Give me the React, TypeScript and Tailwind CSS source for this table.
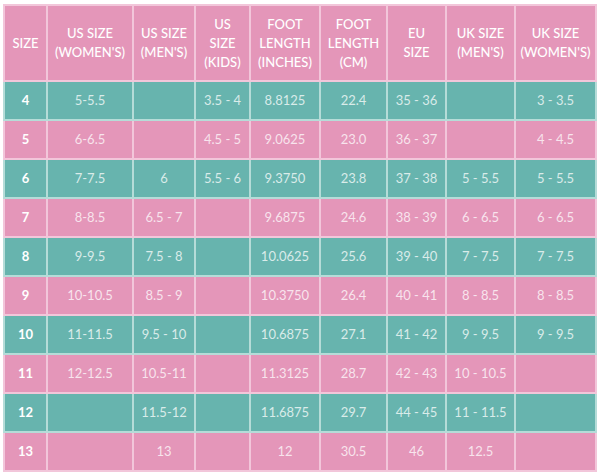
const headers = [
  ["SIZE"],
  ["US SIZE", "(WOMEN'S)"],
  ["US SIZE", "(MEN'S)"],
  ["US", "SIZE", "(KIDS)"],
  ["FOOT", "LENGTH", "(INCHES)"],
  ["FOOT", "LENGTH", "(CM)"],
  ["EU", "SIZE"],
  ["UK SIZE", "(MEN'S)"],
  ["UK SIZE", "(WOMEN'S)"],
];

const widths = ["w-[43px]", "w-[86px]", "w-[62px]", "w-[55px]", "w-[70px]", "w-[67px]", "w-[59px]", "w-[69px]", "w-[81px]"];

const rows = [
  ["4", "5-5.5", "", "3.5 - 4", "8.8125", "22.4", "35 - 36", "", "3 - 3.5"],
  ["5", "6-6.5", "", "4.5 - 5", "9.0625", "23.0", "36 - 37", "", "4 - 4.5"],
  ["6", "7-7.5", "6", "5.5 - 6", "9.3750", "23.8", "37 - 38", "5 - 5.5", "5 - 5.5"],
  ["7", "8-8.5", "6.5 - 7", "", "9.6875", "24.6", "38 - 39", "6 - 6.5", "6 - 6.5"],
  ["8", "9-9.5", "7.5 - 8", "", "10.0625", "25.6", "39 - 40", "7 - 7.5", "7 - 7.5"],
  ["9", "10-10.5", "8.5 - 9", "", "10.3750", "26.4", "40 - 41", "8 - 8.5", "8 - 8.5"],
  ["10", "11-11.5", "9.5 - 10", "", "10.6875", "27.1", "41 - 42", "9 - 9.5", "9 - 9.5"],
  ["11", "12-12.5", "10.5-11", "", "11.3125", "28.7", "42 - 43", "10 - 10.5", ""],
  ["12", "", "11.5-12", "", "11.6875", "29.7", "44 - 45", "11 - 11.5", ""],
  ["13", "", "13", "", "12", "30.5", "46", "12.5", ""],
];

export default function App() {
  return (
    <div className="w-[600px] h-[472px] bg-white pt-[4px] pl-[3px]" style={{ fontFamily: "Lato, 'Noto Sans', sans-serif" }}>
      <table className="border-collapse border border-[#dedede] text-[13px] leading-[19px]">
        <thead>
          <tr className="bg-[#e496b9] h-[76px]">
            {headers.map((h, i) => (
              <th key={i} className={`${widths[i]} border-2 border-[#f2c6da] px-0 text-center font-medium text-white`}>
                {h.map((l, j) => (
                  <div key={j}>{l}</div>
                ))}
              </th>
            ))}
          </tr>
        </thead>
        <tbody>
          {rows.map((r, i) => (
            <tr key={i} className={`h-[39px] ${i % 2 === 0 ? "bg-[#67b4ae]" : "bg-[#e496b9]"}`}>
              {r.map((c, j) => (
                <td
                  key={j}
                  className={`border-2 text-center ${i % 2 === 0 ? "border-[#b5dcd8]" : "border-[#f2c6da]"} ${j === 0 ? "font-bold text-white" : "text-white/75"}`}
                >
                  {c}
                </td>
              ))}
            </tr>
          ))}
        </tbody>
      </table>
    </div>
  );
}
